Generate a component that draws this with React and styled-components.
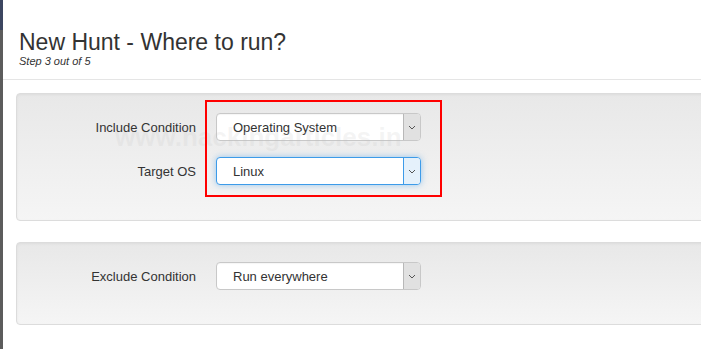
import React from 'react'
import styled, { createGlobalStyle } from 'styled-components'

const GlobalStyle = createGlobalStyle`
  html, body {
    margin: 0;
    padding: 0;
    background: #fff;
    font-family: 'Liberation Sans', Arial, sans-serif;
    color: #333;
    overflow: hidden;
  }
`

const Page = styled.div`
  display: flex;
  width: 701px;
  height: 349px;
  overflow: hidden;
`

const SideStrip = styled.div`
  width: 3px;
  flex: none;
  background: linear-gradient(to bottom, #3c4660 0, #3c4660 30px, #5c5c5c 30px, #5c5c5c 100%);
`

const Modal = styled.div`
  flex: 1;
  display: flex;
  flex-direction: column;
  position: relative;
`

const Header = styled.div`
  padding: 30px 16px 12px 16px;
  border-bottom: 1px solid #e5e5e5;
`

const Title = styled.h3`
  margin: 0;
  font-size: 23px;
  font-weight: 400;
  line-height: 25px;
  color: #333;
`

const Subtitle = styled.div`
  margin: 0;
  font-size: 11px;
  font-style: italic;
  line-height: 12px;
  color: #333;
`

const Body = styled.div`
  padding: 13px 0 0 13px;
  display: flex;
  flex-direction: column;
  gap: 21px;
`

const Well = styled.div`
  margin-right: -40px;
  min-height: ${p => p.$height}px;
  box-sizing: border-box;
  padding: 19px 0 0 0;
  border: 1px solid #dcdcdc;
  border-radius: 4px;
  background: linear-gradient(to bottom, #e8e8e8 0, #f5f5f5 100%);
  box-shadow: inset 0 1px 3px rgba(0, 0, 0, 0.05);
  display: flex;
  flex-direction: column;
  gap: 16px;
`

const Row = styled.div`
  display: grid;
  grid-template-columns: 179px 205px;
  column-gap: 20px;
  align-items: center;
`

const Label = styled.label`
  text-align: right;
  font-size: 13px;
  color: #333;
`

const Select = styled.div`
  position: relative;
  height: 28px;
  box-sizing: border-box;
  border: 1px solid ${p => (p.$focused ? '#3d9be9' : '#c8c8c8')};
  border-radius: 4px;
  background: #fff;
  display: flex;
  align-items: stretch;
  box-shadow: ${p => (p.$focused ? '0 0 6px rgba(61, 155, 233, 0.5)' : 'inset 0 1px 1px rgba(0,0,0,0.04)')};
`

const SelectText = styled.div`
  flex: 1;
  display: flex;
  align-items: center;
  padding-left: 16px;
  font-size: 13px;
  color: #333;
`

const ArrowBox = styled.div`
  width: 16px;
  display: flex;
  align-items: center;
  justify-content: center;
  border-left: 1px solid ${p => (p.$focused ? '#3d9be9' : '#b8b8b8')};
  background: ${p => (p.$focused ? '#e5f1fb' : '#e1e1e1')};
  border-radius: 0 3px 3px 0;
`

const Highlight = styled.div`
  position: absolute;
  left: 202px;
  top: 100px;
  width: 233px;
  height: 93px;
  border: 2px solid #ff0000;
  pointer-events: none;
`

const Watermark = styled.div`
  position: absolute;
  left: 112px;
  top: 122px;
  font-size: 26px;
  font-weight: 700;
  color: rgba(190, 190, 190, 0.16);
  pointer-events: none;
`

const Chevron = () => (
  <svg width="8" height="5" viewBox="0 0 8 5">
    <path d="M1 1 L4 4 L7 1" fill="none" stroke="#555" strokeWidth="1" />
  </svg>
)

const Dropdown = ({ value, focused }) => (
  <Select $focused={focused}>
    <SelectText>{value}</SelectText>
    <ArrowBox $focused={focused}>
      <Chevron />
    </ArrowBox>
  </Select>
)

export default function App() {
  return (
    <Page>
      <GlobalStyle />
      <SideStrip />
      <Modal>
        <Header>
          <Title>New Hunt - Where to run?</Title>
          <Subtitle>Step 3 out of 5</Subtitle>
        </Header>
        <Body>
          <Well $height={128}>
            <Row>
              <Label>Include Condition</Label>
              <Dropdown value="Operating System" />
            </Row>
            <Row>
              <Label>Target OS</Label>
              <Dropdown value="Linux" focused />
            </Row>
          </Well>
          <Well $height={83}>
            <Row>
              <Label>Exclude Condition</Label>
              <Dropdown value="Run everywhere" />
            </Row>
          </Well>
        </Body>
        <Watermark>www.hackingarticles.in</Watermark>
        <Highlight />
      </Modal>
    </Page>
  )
}
